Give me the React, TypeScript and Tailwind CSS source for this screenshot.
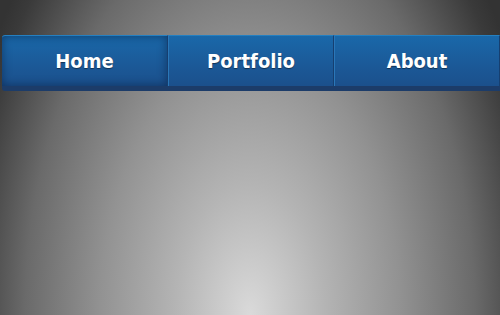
export default function App() {
  const items = ['Home', 'Portfolio', 'About'];

  return (
    <div className="w-[500px] h-[315px] overflow-hidden bg-[#333] bg-[radial-gradient(300px_520px_at_50%_100%,#dadada_0%,#b4b4b4_25%,#929292_50%,#6a6a6a_75%,#3a3a3a_95%,#333333_100%)]">
      <nav className="flex pt-[35px] pl-[2px] font-['DejaVu_Sans_Condensed','DejaVu_Sans',sans-serif]">
        {items.map((label, i) => (
          <a
            key={label}
            href="#"
            className={
              'relative flex h-[56px] w-[166px] shrink-0 flex-col ' +
              (i === 0 ? 'rounded-l-[3px] ' : '')
            }
          >
            <span
              className={
                'flex flex-1 items-center justify-center border-t border-[#2580c0] bg-gradient-to-b from-[#1968a9] via-[#1b5b9a] to-[#1b508c] text-[20px] font-bold text-white [text-shadow:0_1px_1px_rgba(0,0,0,0.45)] ' +
                (i === 0
                  ? 'rounded-tl-[3px] shadow-[inset_0_0_10px_rgba(5,25,60,0.55)] '
                  : 'border-l border-l-[#2a77b8] ') +
                'border-r border-r-[#163f70]'
              }
            >
              {label}
            </span>
            <span
              className={
                'h-[5px] bg-[#1c3c69] ' + (i === 0 ? 'rounded-bl-[3px]' : '')
              }
            />
          </a>
        ))}
      </nav>
    </div>
  );
}
